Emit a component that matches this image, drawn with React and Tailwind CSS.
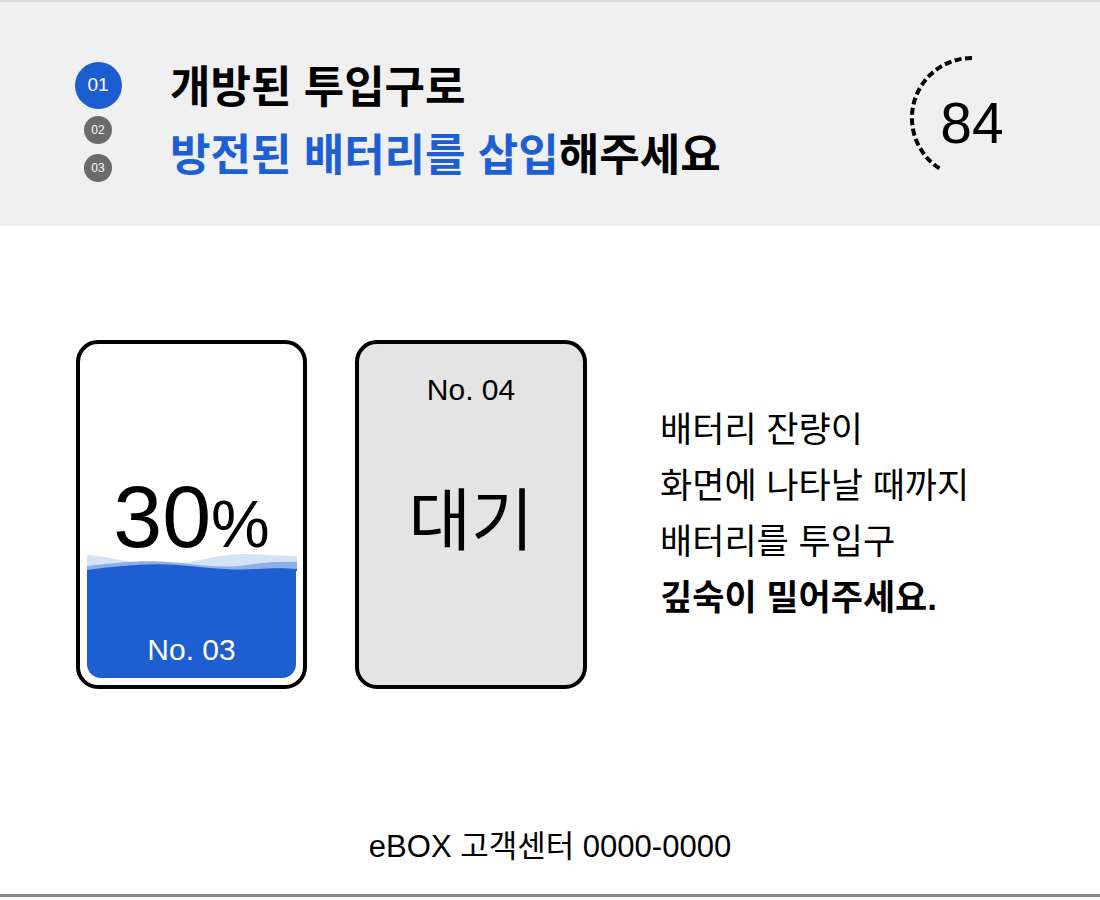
import React from 'react';

const font = { fontFamily: '"Liberation Sans", "Noto Sans CJK KR", sans-serif' };

const Timer = ({ value }) => {
  return (
    <div className="relative w-[140px] h-[140px] flex items-center justify-center">
      <svg className="absolute inset-0" width="140" height="140" viewBox="0 0 140 140">
        <path
          d="M72 10 A60 60 0 0 0 42 122"
          fill="none"
          stroke="#000"
          strokeWidth="4"
          strokeDasharray="7 3.5"
        />
      </svg>
      <span className="text-[57px] leading-none text-black ml-[4px] mt-[10px]">{value}</span>
    </div>
  );
};

const Steps = () => {
  return (
    <div className="w-[44px] flex flex-col items-center">
      <div className="w-[47px] h-[47px] rounded-full bg-[#1c5dd0] text-white text-[19px] flex items-center justify-center">
        01
      </div>
      <div className="mt-[7px] w-[28px] h-[28px] rounded-full bg-[#6b6b6b] text-white text-[12px] flex items-center justify-center">
        02
      </div>
      <div className="mt-[10px] w-[28px] h-[28px] rounded-full bg-[#6b6b6b] text-white text-[12px] flex items-center justify-center">
        03
      </div>
    </div>
  );
};

const Wave = () => {
  return (
    <svg className="absolute left-0 top-[-17px]" width="210" height="18" viewBox="0 0 210 18" preserveAspectRatio="none">
      <path d="M0 2 C30 4 50 14 80 12 C110 10 130 0 160 1 C180 2 195 3 210 3 L210 18 L0 18 Z" fill="#d4e2f6" />
      <path d="M0 13 C30 10 50 7 80 9 C110 11 130 16 160 12 C180 9 195 8 210 9 L210 18 L0 18 Z" fill="#8eafe6" />
      <path d="M0 17 C30 13 60 10 90 12 C120 14 140 18 170 16 C185 15 200 15 210 16 L210 18 L0 18 Z" fill="#1d5fd0" />
    </svg>
  );
};

const App = () => {
  return (
    <div className="w-[1100px] h-[900px] bg-white flex flex-col" style={font}>

      <div className="h-[226px] bg-[#f0f0f0] border-t-2 border-[#dcdcdc] flex items-start justify-between pl-[76px] pr-[60px] pt-[52px]">
        <div className="flex items-start">
          <div className="mt-[8px]">
            <Steps />
          </div>
          <div className="ml-[50px] font-bold text-[44px] leading-[68px]">
            <p className="text-black">개방된 투입구로</p>
            <p>
              <span className="text-[#1d5fd3]">방전된 배터리를 삽입</span>
              <span className="text-black">해주세요</span>
            </p>
          </div>
        </div>
        <div className="mt-[-6px]">
          <Timer value="84" />
        </div>
      </div>

      <div className="flex-1 flex items-start pl-[76px] pt-[114px]">

        <div className="relative w-[231px] h-[349px] rounded-[22px] border-4 border-black bg-white flex items-center justify-center">
          <div className="absolute left-[7px] right-[7px] bottom-[7px] h-[108px] bg-[#1d5fd0] rounded-b-[14px]">
            <Wave />
          </div>
          <p className="relative text-black leading-none mt-[4px]">
            <span className="text-[88px]">30</span>
            <span className="text-[66px]">%</span>
          </p>
          <p className="absolute bottom-[20px] left-0 right-0 text-center text-white text-[30px] leading-none">
            No. 03
          </p>
        </div>

        <div className="ml-[48px] w-[232px] h-[349px] rounded-[22px] border-4 border-black bg-[#e4e4e4] flex flex-col items-center">
          <p className="mt-[31px] text-[30px] leading-none text-black">No. 04</p>
          <p className="mt-[82px] text-[68px] leading-none text-black">대기</p>
        </div>

        <div className="ml-[73px] mt-[62px] text-[35px] leading-[56px] text-black">
          <p>배터리 잔량이</p>
          <p>화면에 나타날 때까지</p>
          <p>배터리를 투입구</p>
          <p className="font-bold">깊숙이 밀어주세요.</p>
        </div>

      </div>

      <div className="pb-[32px] text-center text-[31px] text-black leading-none">
        eBOX 고객센터 0000-0000
      </div>
      <div className="h-[3px] bg-[#8a8a8a] mb-[3px]" />

    </div>
  );
};

export default App;
